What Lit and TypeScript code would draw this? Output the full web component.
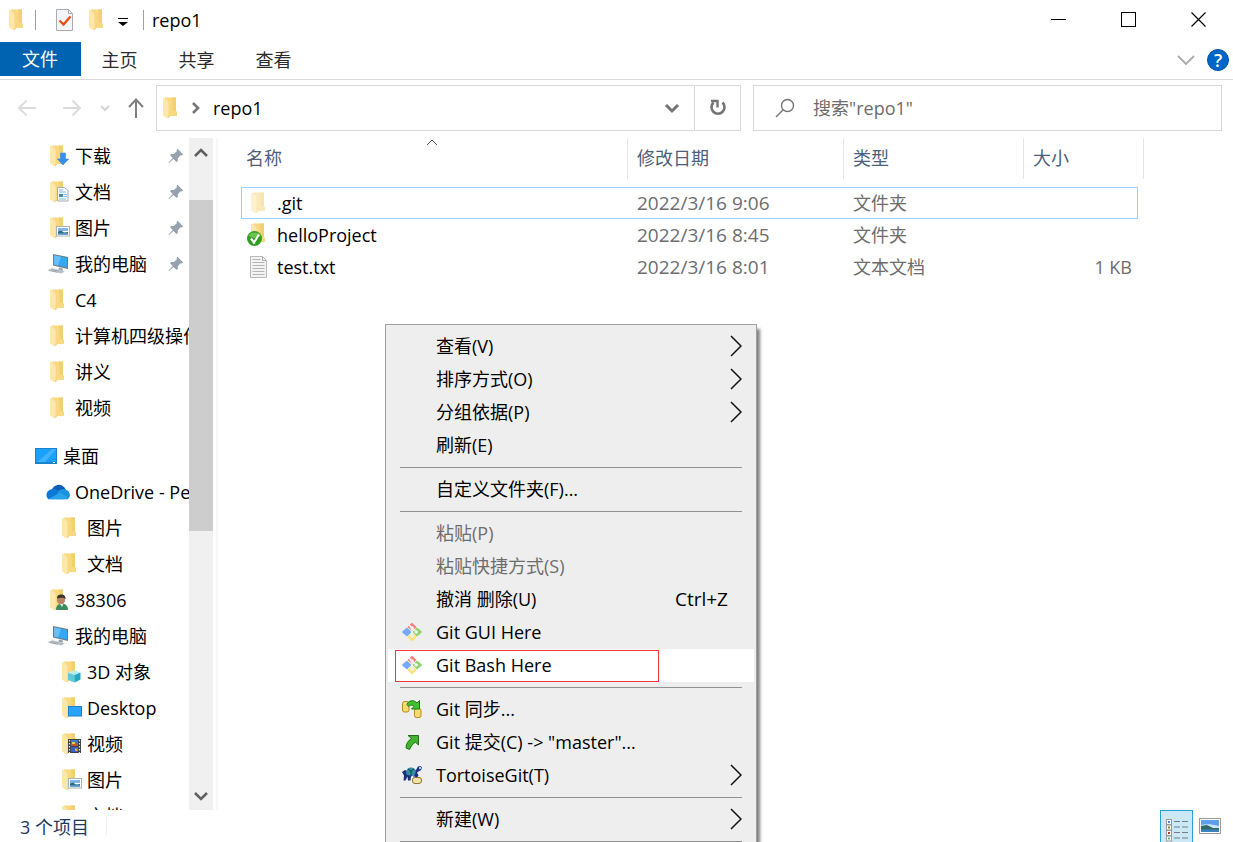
import { LitElement, html, css, svg, nothing, TemplateResult } from "lit";
import { customElement, property, state } from "lit/decorators.js";
import { classMap } from "lit/directives/class-map.js";

const folderShape = svg`
  <path d="M3 .5h11V14l1 1v4H3z" fill="#f8d980"/>
  <path d="M10 .5h4V14h-3z" fill="#f3cf72"/>
  <path d="M1 1h1.500l4 3.500V19l-1 2.500L1 18.500z" fill="#fde7a9"/>
  <path d="M5.500 20.500l1-1.500h2l-2 2z" fill="#f3cf72"/>`;

const pictureShape = svg`
  <rect x="7.500" y="9.500" width="13" height="9.500" fill="#fff" stroke="#a9b3bd"/>
  <rect x="9" y="11" width="10" height="3" fill="#7fb5ea"/>
  <path d="M9 14.500l3-1 3 2 4-.5v2.500H9z" fill="#2f6f74"/>
  <rect x="9" y="16" width="10" height="1.500" fill="#4f8fd0"/>`;

const icon = (w: number, h: number, body: unknown, box = `0 0 ${w} ${h}`) =>
  html`<svg width=${w} height=${h} viewBox=${box} fill="none" aria-hidden="true">${body}</svg>`;

const gitShape = svg`
  <path d="M9 1.500Q10 0 11 1.500L14.500 5 10 9.500 5.500 5z" fill="#ff8080"/>
  <path d="M5 5.500L9.500 10 5 14.500.8 11Q-.5 10 .8 9z" fill="#73aaff"/>
  <path d="M15 5.500L19.200 9q1.300 1 0 2L15 14.500 10.500 10z" fill="#8bd46a"/>
  <path d="M10 10.500l4.500 4.500L11 18.700q-1 1.300-2 0L5.500 15z" fill="#ffe27a"/>
  <path d="M6.500 2.500l3.500 3.500v8M10.500 6.500l4 3.500" stroke="#f2f2f2" stroke-width="1.600"/>
  <circle cx="10" cy="6" r="1.800" fill="#f2f2f2"/><circle cx="10" cy="14" r="1.800" fill="#f2f2f2"/>
  <circle cx="14.200" cy="10" r="1.800" fill="#f2f2f2"/>`;

const icons: Record<string, TemplateResult> = {
  folder: icon(22, 22, folderShape),
  download: icon(22, 22, svg`${folderShape}<path d="M11.500 8h5v6h3.200L14 20l-5.700-6h3.200z" fill="#3690e8" stroke="#2c7fd3" stroke-width=".5"/>`),
  document: icon(22, 22, svg`${folderShape}
    <path d="M8.500 6.500h7l3.500 3v10.500H8.500z" fill="#f7f9fb" stroke="#a5adb5"/>
    <path d="M10 9h4M10 11h7M14.500 13.500H18M14.500 15.500H18M10 18h7" stroke="#8bb8dd"/>
    <rect x="10" y="13" width="4" height="3" fill="#4c86b8"/>`),
  picture: icon(22, 22, svg`${folderShape}${pictureShape}`),
  cube: icon(22, 22, svg`${folderShape}
    <path d="M7 12l6-2.500 6.500 2-6 2.500z" fill="#b6eef6"/><path d="M7 12l6.500 2v7.500L7 19z" fill="#5cc9dd"/>
    <path d="M19.500 11.500L13.500 14v7.500l6-3z" fill="#23a6c4"/>`),
  desktopFolder: icon(22, 22, svg`${folderShape}<rect x="7.500" y="9.500" width="13" height="9.500" fill="#2aa4ff" stroke="#1b7fc9"/>`),
  video: icon(22, 22, svg`${folderShape}
    <rect x="7" y="6" width="13" height="14" fill="#3c3f48"/><rect x="10" y="7" width="7" height="6" fill="#4675cf"/>
    <rect x="10" y="14" width="7" height="5" fill="#3564c0"/>
    <path d="M11 11.500l3-2 3 2v1.500h-6z" fill="#c1582e"/><path d="M11 9h3v2h-3z" fill="#e7c944"/><path d="M14 15.500h2.500V18H14z" fill="#e7a944"/>
    <path d="M8.500 7v13M18.500 7v13" stroke="#e8e8e8" stroke-width="1.200" stroke-dasharray="1.500 1.500"/>`),
  user: icon(22, 22, svg`${folderShape}
    <path d="M7 21c0-5 3-6.500 6-6.500s6 2 6 6.500z" fill="#3c8a63"/><path d="M10.500 14.500L13 18l1.500-3.500z" fill="#dfe8e2"/>
    <circle cx="12" cy="11" r="4" fill="#b98261"/><path d="M8 9.500C8 6 10 5.500 12.500 5.500S17 7 16.500 10.500c-1-2-4-2-8.500-1z" fill="#3a3431"/>`),
  computer: icon(22, 22, svg`
    <path d="M6 1l15 3v12L6 12.500z" fill="#6b7b88"/><path d="M7 2.300l13 2.600v9.700L7 11.600z" fill="#35a8f5"/>
    <path d="M7 2.300l7 1.400-3 8.800-4-1z" fill="#65c0fa"/>
    <path d="M12 14.500l4 1-.5 2.500-4-1z" fill="#9aa5ad"/>
    <path d="M0 17l5.500-2 9 2.500-4.500 2.500z" fill="#c9d0d5"/><path d="M2 17.500l9 1.500M4 16.500l8 1.500" stroke="#87939c" stroke-width=".7"/>
    <path d="M8 18.500l6 2 4-2-3-1z" fill="#b5bec5"/>`),
  desktop: icon(22, 22, svg`<rect x=".5" y="3.500" width="21" height="15" fill="#18a0fb" stroke="#1b80c8"/>
    <path d="M1 18L17 4h4.500L9 18z" fill="#3fb1ff"/><path d="M1 17.500h20" stroke="#1687d6"/><path d="M18 17.500h2" stroke="#fff"/>`),
  cloud: icon(24, 22, svg`
    <path d="M6 9a7 6.500 0 0 1 12.500-2.500L20 9l-8 4z" fill="#0a5db5"/>
    <path d="M6 8c3-.5 5 .5 6 1.500l5 3L3 18.500C-.5 17-1 9.500 6 8z" fill="#0c78d4"/>
    <path d="M12 10.500c2-3 7-3 8-1.500 5 .8 5 8 1 9.500L11 15z" fill="#1d90e0"/>
    <path d="M3.500 17.500L14 11.500l8 5c-.5 1.200-2 2-4 2H6c-1.200 0-2-.4-2.500-1z" fill="#2aa3ea"/>`),
  gitFolder: icon(22, 22, svg`<g opacity=".55">${folderShape}</g>`, "-3 0 22 22"),
  checkedFolder: icon(22, 24, svg`<g transform="translate(3 0)">${folderShape}</g>
    <circle cx="7.500" cy="15.500" r="7.500" fill="#2f9e1c"/><path d="M1.500 12.500a6.500 5 0 0 1 12 0c-3 3-9 3-12 0z" fill="#6cc24f"/>
    <path d="M4 15.500l3 4 5-8" stroke="#fff" stroke-width="2.200"/>`),
  text: icon(22, 24, svg`<path d="M3.500 1.500h12l4 4v17h-16z" fill="#f3f3f3" stroke="#b9b9b9"/>
    <path d="M15.500 1.500v4h4" stroke="#a8a8a8"/><path d="M5.500 4.500h8M5.500 7.500h12M5.500 10.500h12M5.500 13.500h12M5.500 16.500h12M5.500 19.500h12" stroke="#b4b4b4"/>`),
  git: icon(20, 20, gitShape),
  sync: icon(20, 20, svg`
    <rect x=".5" y="2.500" width="6.500" height="10.500" rx="2" fill="#f6d970" stroke="#b48a1c"/>
    <rect x="12.500" y="9.500" width="6.500" height="9" rx="2" fill="#f6d970" stroke="#b48a1c"/>
    <path d="M5 5.500C6.500 1 12 .5 15 4l2.500-2.500v8.500H9.500l2.500-2.500C10 5.500 8 6 6.500 7.500z" fill="#43c02f" stroke="#1b7a12"/>`),
  commit: icon(20, 20, svg`<path d="M6 3.500h10.500V13l-3-2.800C11 11.500 9 14 7.500 17.500L4 16c0-4 2-7.500 5.500-9.500z" fill="#3fb52e" stroke="#256b1c"/>`),
  tortoise: icon(20, 20, svg`
    <path d="M0 7l3-2 2 1 9-1 2-3.500L18.500 1 20 2.500 19 5l-4 2.500 1.500 3-1.500 2h-3l-1-2-2 1-.5 4H6l-.5-4-2 4H1.500l.5-5z" fill="#1c2f7d"/>
    <path d="M4 7c1-5.500 8-6 10-1l-1 3.500c-3 1.500-6 1-8.500 0z" fill="#2f8f9c"/><path d="M6 4l3 2 3-2M9 6v4" stroke="#16465a"/>
    <circle cx="18" cy="3" r="1.200" fill="#9fd4ff"/><path d="M11 10l3 4" stroke="#6c8ae0" stroke-width="1.500"/>
    <rect x="10.500" y="12.500" width="9" height="6" rx="2.500" fill="#f1e2a8" stroke="#8d7430"/>`),
};

const pin = icon(16, 16, svg`<path d="M9.500.8l5.700 5.700-1.600.9-1-.2-2.800 3 .1 2.600-1.400 1.200-3-3L1 15l-.5-.4L4.800 10 2 7.200l1.300-1.300 2.600.2 3-2.900-.3-1.300z" fill="#95a2ad"/>`);
const arrow = icon(12, 22, svg`<path d="M1 1l10 10L1 21" stroke="#111" stroke-width="1.500"/>`);
const boldChevron = (points: string) => icon(16, 12, svg`<polyline points=${points} stroke="#606060" stroke-width="2.600"/>`);

interface NavEntry { label: string; icon: string; level: number; pinned?: boolean; gap?: boolean }
interface MenuEntry { label: string; icon?: string; hint?: string; sub?: boolean; off?: boolean; marked?: boolean }

const NAV: NavEntry[] = [
  { label: "下载", icon: "download", level: 1, pinned: true },
  { label: "文档", icon: "document", level: 1, pinned: true },
  { label: "图片", icon: "picture", level: 1, pinned: true },
  { label: "我的电脑", icon: "computer", level: 1, pinned: true },
  { label: "C4", icon: "folder", level: 1 },
  { label: "计算机四级操作系统", icon: "folder", level: 1 },
  { label: "讲义", icon: "folder", level: 1 },
  { label: "视频", icon: "folder", level: 1 },
  { label: "桌面", icon: "desktop", level: 0, gap: true },
  { label: "OneDrive - Personal", icon: "cloud", level: 1 },
  { label: "图片", icon: "folder", level: 2 },
  { label: "文档", icon: "folder", level: 2 },
  { label: "38306", icon: "user", level: 1 },
  { label: "我的电脑", icon: "computer", level: 1 },
  { label: "3D 对象", icon: "cube", level: 2 },
  { label: "Desktop", icon: "desktopFolder", level: 2 },
  { label: "视频", icon: "video", level: 2 },
  { label: "图片", icon: "picture", level: 2 },
  { label: "文档", icon: "document", level: 2 },
];

const FILES = [
  { name: ".git", icon: "gitFolder", date: "2022/3/16 9:06", type: "文件夹", size: "" },
  { name: "helloProject", icon: "checkedFolder", date: "2022/3/16 8:45", type: "文件夹", size: "" },
  { name: "test.txt", icon: "text", date: "2022/3/16 8:01", type: "文本文档", size: "1 KB" },
];

const MENU: MenuEntry[][] = [
  [
    { label: "查看(V)", sub: true },
    { label: "排序方式(O)", sub: true },
    { label: "分组依据(P)", sub: true },
    { label: "刷新(E)" },
  ],
  [{ label: "自定义文件夹(F)..." }],
  [
    { label: "粘贴(P)", off: true },
    { label: "粘贴快捷方式(S)", off: true },
    { label: "撤消 删除(U)", hint: "Ctrl+Z" },
    { label: "Git GUI Here", icon: "git" },
    { label: "Git Bash Here", icon: "git", marked: true },
  ],
  [
    { label: "Git 同步...", icon: "sync" },
    { label: 'Git 提交(C) -> "master"...', icon: "commit" },
    { label: "TortoiseGit(T)", icon: "tortoise", sub: true },
  ],
  [{ label: "新建(W)", sub: true }],
  [],
];

const controls = css`
  * { box-sizing: border-box; }
  svg { display: block; flex: none; }
  button { font: inherit; color: inherit; background: none; border: 0; padding: 0; margin: 0; text-align: left; }
`;

@customElement("context-menu")
class ContextMenu extends LitElement {
  static styles = [controls, css`
    :host { display: block; width: 372px; padding: 5px 2px; background: #eee; border: 1px solid #a0a0a0; box-shadow: 4px 4px 3px -1px rgba(0, 0, 0, .5); color: #000; }
    .item { position: relative; display: grid; grid-template-columns: 20px 1fr auto; align-items: center; column-gap: 14px; width: 100%; height: 33px; padding: 0 12px 2px 14px; white-space: nowrap; }
    .item:disabled { color: #6d6d6d; }
    .marked { background: #fff; }
    .mark { position: absolute; left: 7px; top: 1px; width: 264px; height: 32px; border: 1px solid #f03a3c; pointer-events: none; }
    .hint { padding-right: 14px; font-size: 19px; }
    .rule { height: 1px; margin: 5px 12px; border: 0; background: #919191; }
  `];

  render() {
    return MENU.map((group, index) => html`
      ${index ? html`<hr class="rule">` : nothing}
      ${group.map((entry) => html`
        <button class=${classMap({ item: true, marked: !!entry.marked })} role="menuitem" ?disabled=${entry.off}>
          <span>${entry.icon ? icons[entry.icon] : nothing}</span>
          <span>${entry.label}</span>
          ${entry.sub ? arrow : entry.hint ? html`<span class="hint">${entry.hint}</span>` : html`<span></span>`}
          ${entry.marked ? html`<span class="mark"></span>` : nothing}
        </button>`)}
    `);
  }
}

@customElement("nav-tree")
class NavTree extends LitElement {
  static styles = [controls, css`
    :host { display: flex; min-height: 0; overflow: hidden; }
    .tree { flex: 1; min-width: 0; overflow: hidden; }
    .entry { display: flex; align-items: center; gap: 4px; width: 100%; height: 36px; padding: 0 5px 0 49px; overflow: hidden; white-space: nowrap; }
    .level0 { padding-left: 35px; gap: 6px; }
    .level2 { padding-left: 61px; }
    .gap { margin-top: 12px; }
    .cloud { padding-left: 46px; gap: 5px; padding-right: 0; }
    .computer { padding-left: 47px; gap: 6px; }
    .label { flex: 1 0 auto; }
    .track { display: flex; flex-direction: column; align-items: center; width: 24px; background: #f0f0f0; }
    .step { display: flex; align-items: center; justify-content: center; width: 24px; height: 28px; }
    .before { flex: 34; }
    .thumb { flex: 331; align-self: stretch; background: #cdcdcd; }
    .after { flex: 251; }
  `];

  render() {
    return html`
      <nav class="tree">
        ${NAV.map((entry) => html`
          <button class="entry level${entry.level} ${entry.gap ? "gap" : ""} ${entry.icon}">
            ${icons[entry.icon]}<span class="label">${entry.label}</span>${entry.pinned ? pin : nothing}
          </button>`)}
      </nav>
      <div class="track">
        <button class="step" aria-label="向上滚动">${boldChevron("2,10 8,4 14,10")}</button>
        <div class="before"></div><div class="thumb"></div><div class="after"></div>
        <button class="step" aria-label="向下滚动">${boldChevron("2,3 8,9 14,3")}</button>
      </div>`;
  }
}

@customElement("file-table")
class FileTable extends LitElement {
  @property({ type: Number }) selected = 0;

  static styles = [controls, css`
    :host { display: block; }
    table { table-layout: fixed; width: 903px; border-spacing: 0; }
    .names { width: 387px; }
    .dates { width: 216px; }
    .types { width: 180px; }
    .sizes { width: 114px; }
    .rest { width: 6px; }
    th { height: 41px; padding: 0 0 2px 9px; border-right: 1px solid #e5e5e5; text-align: left; font-weight: inherit; color: #4c607a; }
    th:first-child { padding-left: 5px; }
    .plain { border-right: 0; }
    .last { padding: 0; }
    .sort { position: relative; display: block; }
    .sort svg { position: absolute; left: 180px; top: -7px; }
    .space td { height: 8px; padding: 0; }
    td { height: 32px; padding: 0 0 0 9px; color: #6d6d6d; white-space: nowrap; }
    .name { padding-left: 6px; color: #000; }
    .date { font-size: 19px; }
    .size { text-align: right; padding-right: 6px; }
    .file { display: flex; align-items: center; gap: 8px; }
    .selected td { box-shadow: inset 0 1px #99d1ff, inset 0 -1px #99d1ff; }
    .selected .name { box-shadow: inset 0 1px #99d1ff, inset 0 -1px #99d1ff, inset 1px 0 #99d1ff; }
    .selected .size { box-shadow: inset 0 1px #99d1ff, inset 0 -1px #99d1ff, inset -1px 0 #99d1ff; }
  `];

  render() {
    return html`
      <table>
        <colgroup><col class="names"><col class="dates"><col class="types"><col class="sizes"><col class="rest"></colgroup>
        <thead><tr>
          <th><span class="sort">名称${icon(12, 7, svg`<path d="M1 6l5-5 5 5" stroke="#5c5c5c"/>`)}</span></th>
          <th>修改日期</th><th>类型</th><th class="plain">大小</th><th class="last"></th>
        </tr></thead>
        <tbody>
          <tr class="space"><td colspan="5"></td></tr>
          ${FILES.map((file, index) => html`
            <tr class=${classMap({ selected: index === this.selected })}>
              <td class="name"><span class="file">${icons[file.icon]}<span>${file.name}</span></span></td>
              <td class="date">${file.date}</td><td>${file.type}</td><td class="size">${file.size}</td>
            </tr>`)}
        </tbody>
      </table>`;
  }
}

@customElement("app-root")
class AppRoot extends LitElement {
  @state() private query = "";

  static styles = [controls, css`
    :host { display: flex; flex-direction: column; height: 100vh; overflow: hidden; background: #fff; color: #000; font: 18px/24px "Open Sans", "Noto Sans CJK SC", sans-serif; }
    .titlebar { display: flex; align-items: center; height: 42px; padding: 0 0 2px 8px; }
    .divider { width: 1px; height: 20px; background: #a0a0a0; }
    .quick { display: flex; align-items: center; gap: 9px; padding: 0 14px 0 19px; }
    .title { flex: 1; padding-left: 8px; }
    .appicon { width: 27px; }
    .window { display: flex; width: 70px; height: 40px; align-items: center; justify-content: center; }
    .ribbon { display: flex; align-items: flex-start; height: 38px; border-bottom: 1px solid #dadbdc; }
    .tab { display: flex; align-items: center; justify-content: center; width: 77px; height: 36px; color: #2b2b2b; }
    .filetab { width: 81px; height: 34px; padding-right: 1px; background: #0063b1; color: #fff; }
    .grow { flex: 1; }
    .ribbon-end { display: flex; align-items: center; gap: 12px; height: 36px; padding-right: 4px; }
    .help { width: 22px; height: 22px; border-radius: 50%; background: #0066c8; border: 1px solid #00549f; color: #fff; text-align: center; font-weight: 600; line-height: 20px; }
    .bar { display: grid; grid-template-columns: 127px minmax(0, 585fr) minmax(0, 469fr); align-items: center; gap: 12px; padding: 5px 11px 7px 17px; }
    .moves { display: flex; align-items: center; gap: 18px; }
    .forward { margin-left: 7px; }
    .address { display: flex; align-items: center; height: 46px; border: 1px solid #d9d9d9; }
    .crumb { display: flex; flex: 1; align-items: center; gap: 13px; padding-left: 5px; }
    .refresh { display: flex; align-items: center; justify-content: center; width: 46px; height: 44px; border-left: 1px solid #d9d9d9; }
    .drop { padding: 0 14px; }
    .search { display: flex; align-items: center; gap: 18px; height: 46px; padding-left: 21px; border: 1px solid #d9d9d9; }
    .query { flex: 1; min-width: 0; border: 0; outline: 0; padding: 0; font: inherit; background: none; }
    .query::placeholder { color: #6d6d6d; opacity: 1; }
    .main { position: relative; display: flex; flex: 1; min-height: 0; }
    .side { width: 213px; }
    .files { flex: 1; min-width: 0; margin-left: 3px; border-left: 2px solid #f7f7f7; padding-left: 23px; }
    .menu { position: absolute; left: 385px; top: 186px; z-index: 2; }
    .status { display: flex; align-items: center; height: 32px; padding: 0 12px 0 20px; color: #1e395b; }
    .count { padding: 2px 17px 0 0; border-right: 1px solid #efefef; line-height: 16px; }
    .details { display: flex; align-items: flex-end; justify-content: center; width: 33px; height: 32px; margin-right: 6px; background: #cce8f6; border: 1px solid #26a0da; border-bottom: 0; }
  `];

  private onInput(event: InputEvent) {
    this.query = (event.target as HTMLInputElement).value;
  }

  render() {
    const small = icon(16, 22, folderShape);
    return html`
      <header class="titlebar">
        <span class="appicon">${small}</span><span class="divider"></span>
        <span class="quick">
          <button aria-label="属性">${icon(20, 24, svg`<path d="M1.500 1.500h12l4 4v17h-16z" fill="#f4f5f7" stroke="#a9adb3"/><path d="M13.500 1.500v4h4" stroke="#a9adb3"/><path d="M4.500 12.500l4 4 7-8" stroke="#e8521a" stroke-width="2.400"/>`)}</button>
          <button aria-label="新建文件夹">${icon(22, 22, folderShape, "-4 0 22 22")}</button>
          <button aria-label="自定义">${icon(14, 12, svg`<path d="M3 4.500h10" stroke="#000"/><path d="M3 8h10l-5 4z" fill="#000"/>`)}</button>
        </span>
        <span class="divider"></span><span class="title">repo1</span>
        <button class="window" aria-label="最小化">${icon(16, 16, svg`<path d="M1 7.500h15" stroke="#000"/>`)}</button>
        <button class="window" aria-label="最大化">${icon(16, 16, svg`<rect x="1.500" y=".5" width="14" height="14" stroke="#000"/>`)}</button>
        <button class="window" aria-label="关闭">${icon(16, 16, svg`<path d="M1.500 .5l14 14M15.500 .5l-14 14" stroke="#000" stroke-width="1.200"/>`)}</button>
      </header>

      <div class="ribbon">
        <button class="tab filetab">文件</button>
        <button class="tab">主页</button><button class="tab">共享</button><button class="tab">查看</button>
        <span class="grow"></span>
        <span class="ribbon-end">
          <button aria-label="展开功能区">${icon(18, 12, svg`<path d="M1 2l8 8 8-8" stroke="#ababab" stroke-width="1.800"/>`)}</button>
          <button class="help">?</button>
        </span>
      </div>

      <div class="bar">
        <div class="moves">
          <button aria-label="后退">${icon(20, 18, svg`<path d="M19 9H2M9.500 1.500L2 9l7.500 7.500" stroke="#dcdcdc" stroke-width="2"/>`)}</button>
          <button class="forward" aria-label="前进">${icon(20, 18, svg`<path d="M1 9h17M10.500 1.500L18 9l-7.500 7.500" stroke="#dcdcdc" stroke-width="2"/>`)}</button>
          <button aria-label="最近浏览的位置">${icon(10, 8, svg`<path d="M1 2l4 4 4-4" stroke="#d5d5d5" stroke-width="2"/>`)}</button>
          <button aria-label="上移">${icon(16, 20, svg`<path d="M8 20V2M1 9l7-7.500L15 9" stroke="#7d7d7d" stroke-width="2"/>`)}</button>
        </div>
        <div class="address">
          <span class="crumb">
            ${small}
            ${icon(9, 12, svg`<path d="M2 1l5 5-5 5" stroke="#777" stroke-width="2.600"/>`)}
            <span>repo1</span>
          </span>
          <button class="drop" aria-label="以前的位置">${icon(16, 12, svg`<path d="M2 3l6 6 6-6" stroke="#757575" stroke-width="3"/>`)}</button>
          <button class="refresh" aria-label="刷新">${icon(18, 20, svg`<path d="M13.500 4.500a6.500 6.500 0 1 1-9 0" stroke="#757575" stroke-width="2.600"/><path d="M2 3h6.500v6.500" stroke="#757575" stroke-width="2.400"/>`)}</button>
        </div>
        <label class="search">
          ${icon(20, 20, svg`<circle cx="12.500" cy="7.500" r="6" stroke="#757575" stroke-width="1.400"/><path d="M8.200 11.800L1 19" stroke="#757575" stroke-width="1.400"/>`)}
          <input class="query" type="text" aria-label="搜索" placeholder='搜索"repo1"' .value=${this.query} @input=${this.onInput}>
        </label>
      </div>

      <main class="main">
        <nav-tree class="side"></nav-tree>
        <section class="files"><file-table></file-table></section>
        <context-menu class="menu" role="menu"></context-menu>
      </main>

      <footer class="status">
        <span class="count">3 个项目</span>
        <span class="grow"></span>
        <button class="details" aria-label="详细信息">${icon(24, 24, svg`
          ${[0, 1, 2, 3].map((n) => svg`
            <rect x="1.500" y=${n * 5.5 + 1.5} width="5" height="5" fill="#fff" stroke="#9a9a9a"/>
            <rect x="3" y=${n * 5.5 + 3} width="2" height="2" fill=${["#4a8fd8", "#8a8433", "#c0392b", "#6fae7c"][n]}/>
            <path d=${`M9 ${n * 5.5 + 3.5}h6M17 ${n * 5.5 + 3.5}h6`} stroke="#6f7f88"/>`)}`)}</button>
        <button aria-label="大缩略图">${icon(22, 18, svg`
          <rect x=".5" y="1.500" width="21" height="15" fill="#fff" stroke="#9a9a9a"/>
          <rect x="2" y="3" width="18" height="12" fill="#5f9ee8"/><path d="M2 8c5-1 10-1 18 1v2H2z" fill="#cfe4f7"/>
          <path d="M2 9l6-1 6 3h6v2H2z" fill="#2f6b62"/><rect x="2" y="12.500" width="18" height="2.500" fill="#3d83bd"/>`)}</button>
      </footer>`;
  }
}
